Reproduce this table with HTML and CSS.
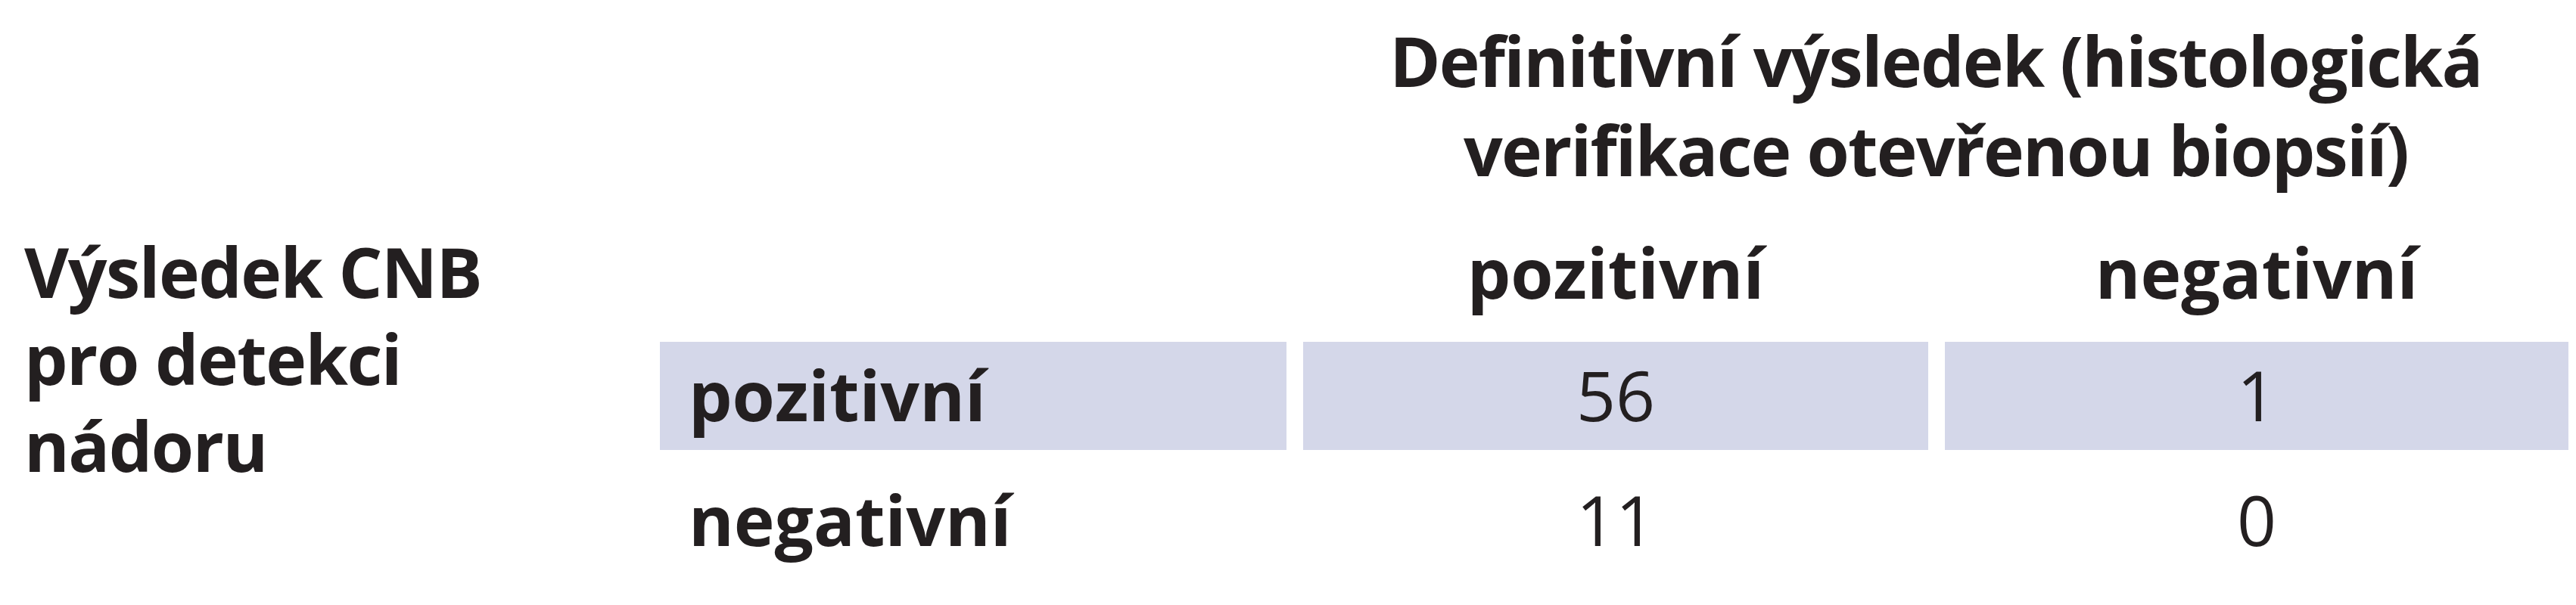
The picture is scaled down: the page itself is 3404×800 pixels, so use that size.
FILE: index.html
```
<!DOCTYPE html>
<html lang="cs">
<head>
<meta charset="utf-8">
<title>Výsledek CNB</title>
<link rel="stylesheet" href="styles.css">
</head>
<body>
<div class="tbl">
  <div class="hdr">Definitivní výsledek (histologická<br>verifikace otevřenou biopsií)</div>
  <div class="side">Výsledek CNB<br>pro detekci<br>nádoru</div>
  <div class="colh col-c">pozitivní</div>
  <div class="colh col-d">negativní</div>
  <div class="rowh r3 hl">pozitivní</div>
  <div class="num r3 col-c hl">56</div>
  <div class="num r3 col-d hl">1</div>
  <div class="rowh r4">negativní</div>
  <div class="num r4 col-c">11</div>
  <div class="num r4 col-d">0</div>
</div>
</body>
</html>
```
FILE: styles.css
```
html, body {
  margin: 0;
  padding: 0;
  background: #ffffff;
}
body {
  width: 3404px;
  height: 800px;
  overflow: hidden;
  font-family: "Open Sans", "Noto Sans", "Liberation Sans", sans-serif;
  color: #231f20;
  font-size: 91px;
  line-height: 118px;
}
.tbl {
  display: grid;
  grid-template-columns: 828px 828px 826px 824px;
  grid-template-rows: 265px 143px 143px 143px;
  column-gap: 22px;
  row-gap: 22px;
  padding: 0 10px 0 22px;
}
.hdr {
  grid-column: 3 / 5;
  grid-row: 1;
  font-weight: 700;
  text-align: center;
  letter-spacing: -1.8px;
  padding-top: 21px;
}
.side {
  grid-column: 1;
  grid-row: 2 / 5;
  font-weight: 700;
  line-height: 115px;
  letter-spacing: -1.5px;
  padding: 15px 0 0 10px;
}
.colh {
  grid-row: 2;
  font-weight: 700;
  text-align: center;
  padding-top: 14px;
}
.col-c { grid-column: 3; }
.col-d { grid-column: 4; }
.r3 { grid-row: 3; }
.r4 { grid-row: 4; }
.rowh {
  grid-column: 2;
  font-weight: 700;
  padding: 11px 0 0 38px;
}
.num {
  font-weight: 400;
  text-align: center;
  padding-top: 11px;
}
.hl {
  background: #d4d7e9;
}
```
